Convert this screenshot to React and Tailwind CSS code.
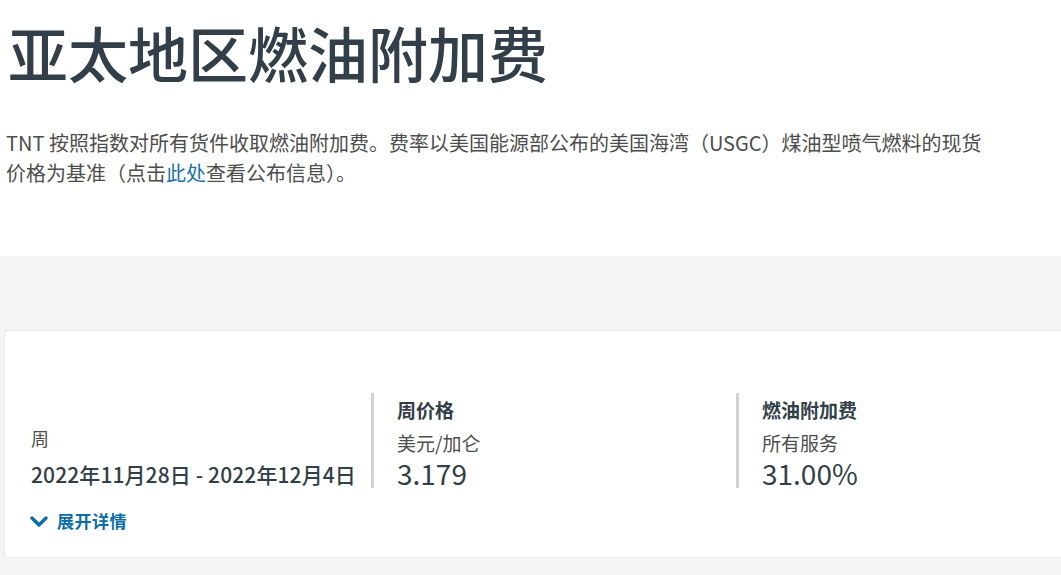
import React from "react";

const Chevron = () => (
  <svg width="18" height="13" viewBox="0 0 18 13" className="shrink-0 -ml-[1px]">
    <polyline points="2,3 9,10 16,3" fill="none" stroke="#0b6ea8" strokeWidth="3.4" strokeLinecap="round" strokeLinejoin="round" />
  </svg>
);

export default function App() {
  return (
    <div className="min-h-[575px] w-[1061px] overflow-hidden bg-white font-['Noto_Sans_CJK_SC',sans-serif]">
      <div className="px-[6px] pt-[14px] pb-[68px]">
        <h1 className="text-[60px] leading-[76px] font-medium text-[#333f48] pl-[2px]">亚太地区燃油附加费</h1>
        <p className="mt-[38px] max-w-[990px] text-[20px] leading-[30px] text-[#4d4d4d]">
          TNT 按照指数对所有货件收取燃油附加费。费率以美国能源部公布的美国海湾（USGC）煤油型喷气燃料的现货价格为基准（点击<a href="#" className="text-[#1870ad]">此处</a>查看公布信息）。
        </p>
      </div>

      <div className="bg-[#f4f4f4] pt-[74px] pb-[40px] pl-[4px]">
        <div className="w-[1100px] bg-white border-l border-t border-[#ececec] pt-[62px] pb-[21px] pl-[26px]">
          <div className="flex items-end h-[95px]">
            <div className="w-[340px] text-[#333f48]">
              <div className="text-[18px] leading-[44px] text-[#4d4d4d]">周</div>
              <div className="text-[21px] leading-[28px] font-medium whitespace-nowrap tracking-[0.1px]">2022年11月28日 - 2022年12月4日</div>
            </div>
            <div className="w-[365px] h-full border-l-[3px] border-[#d2d2d2] pl-[23px] flex flex-col justify-end">
              <div className="text-[19px] leading-[36px] font-bold text-[#333f48]">周价格</div>
              <div className="text-[19px] leading-[30px] text-[#4d4d4d]">美元/加仑</div>
              <div className="text-[28px] leading-[30px] text-[#333f48]">3.179</div>
            </div>
            <div className="w-[365px] h-full border-l-[3px] border-[#d2d2d2] pl-[23px] flex flex-col justify-end">
              <div className="text-[19px] leading-[36px] font-bold text-[#333f48]">燃油附加费</div>
              <div className="text-[19px] leading-[30px] text-[#4d4d4d]">所有服务</div>
              <div className="text-[28px] leading-[30px] text-[#333f48]">31.00%</div>
            </div>
          </div>
          <button className="mt-[18px] flex items-center gap-[9px] h-[30px] text-[17px] font-bold text-[#0b6ea8] tracking-[0.5px]">
            <Chevron />
            展开详情
          </button>
        </div>
      </div>
    </div>
  );
}
